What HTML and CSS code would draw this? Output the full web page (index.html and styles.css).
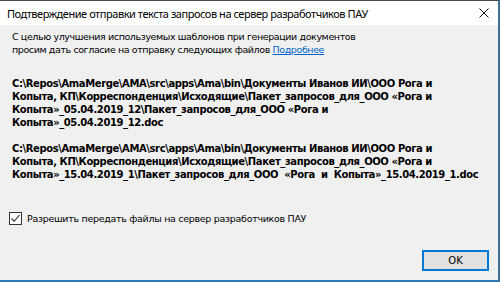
FILE: index.html
```html
<!DOCTYPE html>
<html lang="ru">
<head>
    <meta charset="utf-8">
    <title>Подтверждение отправки</title>
    <link rel="stylesheet" href="styles.css">
</head>
<body>
    <div class="window">
        <div class="titlebar">
            <span class="title">Подтверждение отправки текста запросов на сервер разработчиков ПАУ</span>
            <svg class="close" width="10" height="10" viewBox="0 0 10 10">
                <path d="M0.5 0.5 L9.5 9.5 M9.5 0.5 L0.5 9.5" stroke="#111" stroke-width="1" fill="none"/>
            </svg>
        </div>
        <div class="content">
            <p class="intro">С целью улучшения используемых шаблонов при генерации документов<br>
                просим дать согласие на отправку следующих файлов <a href="#" class="more">Подробнее</a></p>
            <div class="files">
                <p class="path">C:\Repos\AmaMerge\AMA\src\apps\Ama\bin\Документы Иванов ИИ\ООО Рога и<br>Копыта, КП\Корреспонденция\Исходящие\Пакет_запросов_для_ООО «Рога и<br>Копыта»_05.04.2019_12\Пакет_запросов_для_ООО «Рога и<br>Копыта»_05.04.2019_12.doc</p>
                <p class="path">C:\Repos\AmaMerge\AMA\src\apps\Ama\bin\Документы Иванов ИИ\ООО Рога и<br>Копыта, КП\Корреспонденция\Исходящие\Пакет_запросов_для_ООО «Рога и<br>Копыта»_15.04.2019_1\Пакет_запросов_для_ООО&nbsp; «Рога&nbsp; и&nbsp; Копыта»_15.04.2019_1.doc</p>
            </div>
            <label class="agree">
                <span class="box">
                    <svg width="11" height="11" viewBox="0 0 11 11">
                        <path d="M1.5 5.5 L4.2 8.3 L9.5 2" stroke="#222" stroke-width="1.1" fill="none"/>
                    </svg>
                </span>
                Разрешить передать файлы на сервер разработчиков ПАУ
            </label>
            <div class="buttons">
                <button class="ok">OK</button>
            </div>
        </div>
    </div>
</body>
</html>
```

FILE: styles.css
```css
body {
    margin: 0;
    background-color: #f0f0f0;
    font-family: "DejaVu Sans", Tahoma, sans-serif;
    color: #000;
}
.window {
    width: 500px;
    height: 282px;
    box-sizing: border-box;
    border-top: 1px solid #4a4a4a;
    border-right: 2px solid #3b6f9e;
    border-bottom: 2px solid #2b79b8;
    display: flex;
    flex-direction: column;
    background-color: #f0f0f0;
}
.titlebar {
    height: 24px;
    background-color: #fff;
    display: flex;
    align-items: center;
    padding-left: 7px;
    padding-right: 9px;
}
.title {
    font-family: "Noto Sans", sans-serif;
    font-size: 11px;
    letter-spacing: -0.45px;
    color: #000;
}
.close {
    margin-left: auto;
}
.content {
    flex: 1;
    display: flex;
    flex-direction: column;
    padding: 5px 9px 9px 12px;
    font-size: 9.5px;
    letter-spacing: -0.4px;
}
.intro {
    margin: 0;
    line-height: 13px;
}
.more {
    color: #0066cc;
}
.files {
    margin-top: 21px;
    font-size: 10px;
}
.path {
    margin: 0 0 13px 0;
    line-height: 13px;
    font-weight: bold;
    white-space: nowrap;
}
.agree {
    display: flex;
    align-items: center;
    margin-top: 18px;
    margin-left: -3px;
    height: 13px;
    letter-spacing: -0.3px;
}
.box {
    width: 11px;
    height: 11px;
    border: 1px solid #333;
    background-color: #fff;
    margin-right: 5px;
    display: flex;
}
.buttons {
    margin-top: auto;
    display: flex;
    justify-content: flex-end;
}
.ok {
    width: 67px;
    height: 21px;
    background-color: #e1e1e1;
    border: 2px solid #0078d7;
    font-family: "DejaVu Sans", Tahoma, sans-serif;
    font-size: 10px;
    padding: 0;
}
```
